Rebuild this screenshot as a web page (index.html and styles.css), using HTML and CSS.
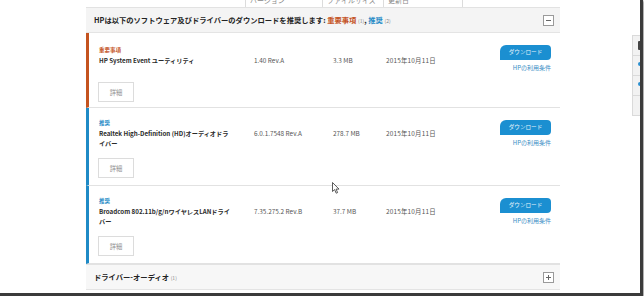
FILE: index.html
```html
<!DOCTYPE html>
<html lang="ja">
<head>
    <meta charset="UTF-8">
    <meta name="viewport" content="width=device-width, initial-scale=1.0">
    <title>ドライバー - ダウンロード</title>
    <link rel="stylesheet" href="styles.css">
</head>
<body>
    <div class="window">
        <div class="panel">
            <div class="colhead">
                <span class="ch ch-ver"><span>バージョン</span></span>
                <span class="ch ch-size"><span>ファイルサイズ</span></span>
                <span class="ch ch-date"><span>更新日</span></span>
            </div>

            <div class="group-head">
                <h2>HPは以下のソフトウェア及びドライバーのダウンロードを推奨します: <span class="crit">重要事項</span> <span class="count">(1)</span>, <span class="rec">推奨</span> <span class="count">(2)</span></h2>
                <span class="toggle minus"></span>
            </div>

            <div class="item critical">
                <div class="info">
                    <div class="tag">重要事項</div>
                    <div class="name">HP System Event ユーティリティ</div>
                    <button class="detail">詳細</button>
                </div>
                <div class="cell">1.40 Rev.A</div>
                <div class="cell">3.3 MB</div>
                <div class="cell date">2015年10月11日</div>
                <div class="actions">
                    <a class="dl" href="#">ダウンロード</a>
                    <a class="terms" href="#">HPの利用条件</a>
                </div>
            </div>

            <div class="item recommended">
                <div class="info">
                    <div class="tag">推奨</div>
                    <div class="name">Realtek High-Definition (HD)オーディオドライバー</div>
                    <button class="detail">詳細</button>
                </div>
                <div class="cell">6.0.1.7548 Rev.A</div>
                <div class="cell">278.7 MB</div>
                <div class="cell date">2015年10月11日</div>
                <div class="actions">
                    <a class="dl" href="#">ダウンロード</a>
                    <a class="terms" href="#">HPの利用条件</a>
                </div>
            </div>

            <div class="item recommended">
                <div class="info">
                    <div class="tag">推奨</div>
                    <div class="name">Broadcom 802.11b/g/nワイヤレスLANドライバー</div>
                    <button class="detail">詳細</button>
                </div>
                <div class="cell">7.35.275.2 Rev.B</div>
                <div class="cell">37.7 MB</div>
                <div class="cell date">2015年10月11日</div>
                <div class="actions">
                    <a class="dl" href="#">ダウンロード</a>
                    <a class="terms" href="#">HPの利用条件</a>
                </div>
            </div>

            <div class="group-head closed">
                <h2>ドライバー-オーディオ <span class="count">(1)</span></h2>
                <span class="toggle plus"></span>
            </div>
        </div>

        <div class="sidenav">
            <div class="nav-item"><span class="nav-mark dark"></span></div>
            <div class="nav-item"><span class="nav-mark blue"></span></div>
            <div class="nav-item"><span class="nav-mark blue"></span></div>
            <div class="nav-item"></div>
        </div>

        <svg class="cursor" width="8" height="12" viewBox="0 0 8 12">
            <path d="M0.5 0.5 L0.5 9.5 L2.6 7.6 L4.2 11.2 L5.6 10.6 L4.1 7.1 L7 7.1 Z" fill="#fff" stroke="#333" stroke-width="0.8"/>
        </svg>
    </div>
</body>
</html>
```

FILE: styles.css
```css
html, body {
    margin: 0;
    padding: 0;
    background-color: #fff;
    font-family: "Noto Sans CJK JP", "Liberation Sans", sans-serif;
    color: #333;
}

.window {
    position: relative;
    width: 640px;
    height: 293px;
    overflow: hidden;
    background-color: #fff;
    border-right: 3px solid #3b3b3b;
    border-bottom: 3px solid #3b3b3b;
    box-shadow: 1px 1px 2px rgba(0, 0, 0, 0.45);
}

.panel {
    width: 474px;
    margin-left: 86px;
}

/* table header, scrolled mostly out of view */
.colhead {
    display: flex;
    height: 7px;
    margin-left: 159px;
    width: 218px;
    overflow: hidden;
}

.ch {
    display: block;
    height: 7px;
    padding-left: 4px;
    border-left: 1px solid #dcdcdc;
    overflow: hidden;
    box-sizing: border-box;
}

.ch span {
    display: block;
    margin-top: -3px;
    font-size: 7px;
    line-height: 7px;
    color: #8a8a8a;
    white-space: nowrap;
}

.ch-ver { width: 77px; }
.ch-size { width: 61px; }
.ch-date { width: 80px; border-right: 1px solid #dcdcdc; }

/* group header */
.group-head {
    display: flex;
    align-items: center;
    justify-content: space-between;
    height: 24px;
    padding: 0 6px 0 8px;
    background-color: #f4f4f4;
    border-top: 1px solid #e2e2e2;
    border-bottom: 1px solid #e4e4e4;
}

.group-head.closed {
    background-color: #f7f7f7;
}

.group-head h2 {
    margin: 0;
    font-size: 7.3px;
    font-weight: bold;
    color: #222;
    white-space: nowrap;
}

.group-head .crit { color: #c4531f; }
.group-head .rec { color: #1f8ac6; }

.count {
    font-size: 5px;
    font-weight: normal;
    color: #888;
}

.toggle {
    position: relative;
    width: 9px;
    height: 9px;
    border: 1px solid #9a9a9a;
    background-color: #fff;
}

.toggle::before {
    content: "";
    position: absolute;
    left: 2px;
    top: 4px;
    width: 5px;
    height: 1px;
    background-color: #666;
}

.toggle.plus::after {
    content: "";
    position: absolute;
    left: 4px;
    top: 2px;
    width: 1px;
    height: 5px;
    background-color: #666;
}

/* download rows */
.item {
    display: grid;
    grid-template-columns: 155px 79px 53px 1fr auto;
    padding: 10px 9px 7px 10px;
    border-left: 3px solid #1f8ac6;
    border-bottom: 1px solid #e2e2e2;
    background-color: #fff;
}

.item.critical {
    padding-top: 12px;
    padding-bottom: 5px;
    border-left-color: #c4531f;
}

.tag {
    font-size: 5.5px;
    font-weight: bold;
    line-height: 11px;
    color: #1f8ac6;
}

.critical .tag {
    color: #c4531f;
}

.name {
    max-width: 135px;
    min-height: 16px;
    font-size: 6.2px;
    font-weight: bold;
    line-height: 9.5px;
    color: #2a2a2a;
    line-break: strict;
}

.detail {
    display: block;
    width: 36px;
    height: 20px;
    margin-top: 10px;
    margin-left: -1px;
    padding: 0;
    border: 1px solid #dcdcdc;
    background-color: #fff;
    font-family: inherit;
    font-size: 6.3px;
    color: #8f8f8f;
}

.cell {
    padding-top: 11px;
    font-size: 6.4px;
    line-height: 9.5px;
    color: #555;
    white-space: nowrap;
}

.cell.date {
    letter-spacing: 0.2px;
}

.actions {
    padding-top: 2px;
}

.critical .actions {
    padding-top: 0;
}

.dl {
    display: block;
    width: 51px;
    height: 15px;
    line-height: 15px;
    border-radius: 6px 4px 4px 0;
    background-color: #1b8fd1;
    color: #e8f4fb;
    font-size: 5.6px;
    text-align: center;
    text-decoration: none;
}

.terms {
    display: block;
    margin-top: 3px;
    line-height: 9px;
    font-size: 6px;
    color: #3a8cc4;
    text-align: right;
    text-decoration: none;
}

/* side navigation, cut by the window edge */
.sidenav {
    position: absolute;
    left: 632px;
    top: 35px;
    width: 14px;
    height: 79px;
    background-color: #f2f2f2;
    border: 1px solid #dadada;
}

.nav-item {
    position: relative;
    height: 19px;
    border-bottom: 1px solid #dadada;
}

.nav-item:last-child {
    border-bottom: none;
}

.nav-mark {
    position: absolute;
    left: 5px;
    top: 6px;
    width: 4px;
    height: 4px;
    border-radius: 2px;
}

.nav-mark.dark {
    top: 5px;
    height: 9px;
    border-radius: 1px;
    background-color: #444;
}

.nav-mark.blue {
    background-color: #2a8fd0;
}

.cursor {
    position: absolute;
    left: 332px;
    top: 182px;
}
```
